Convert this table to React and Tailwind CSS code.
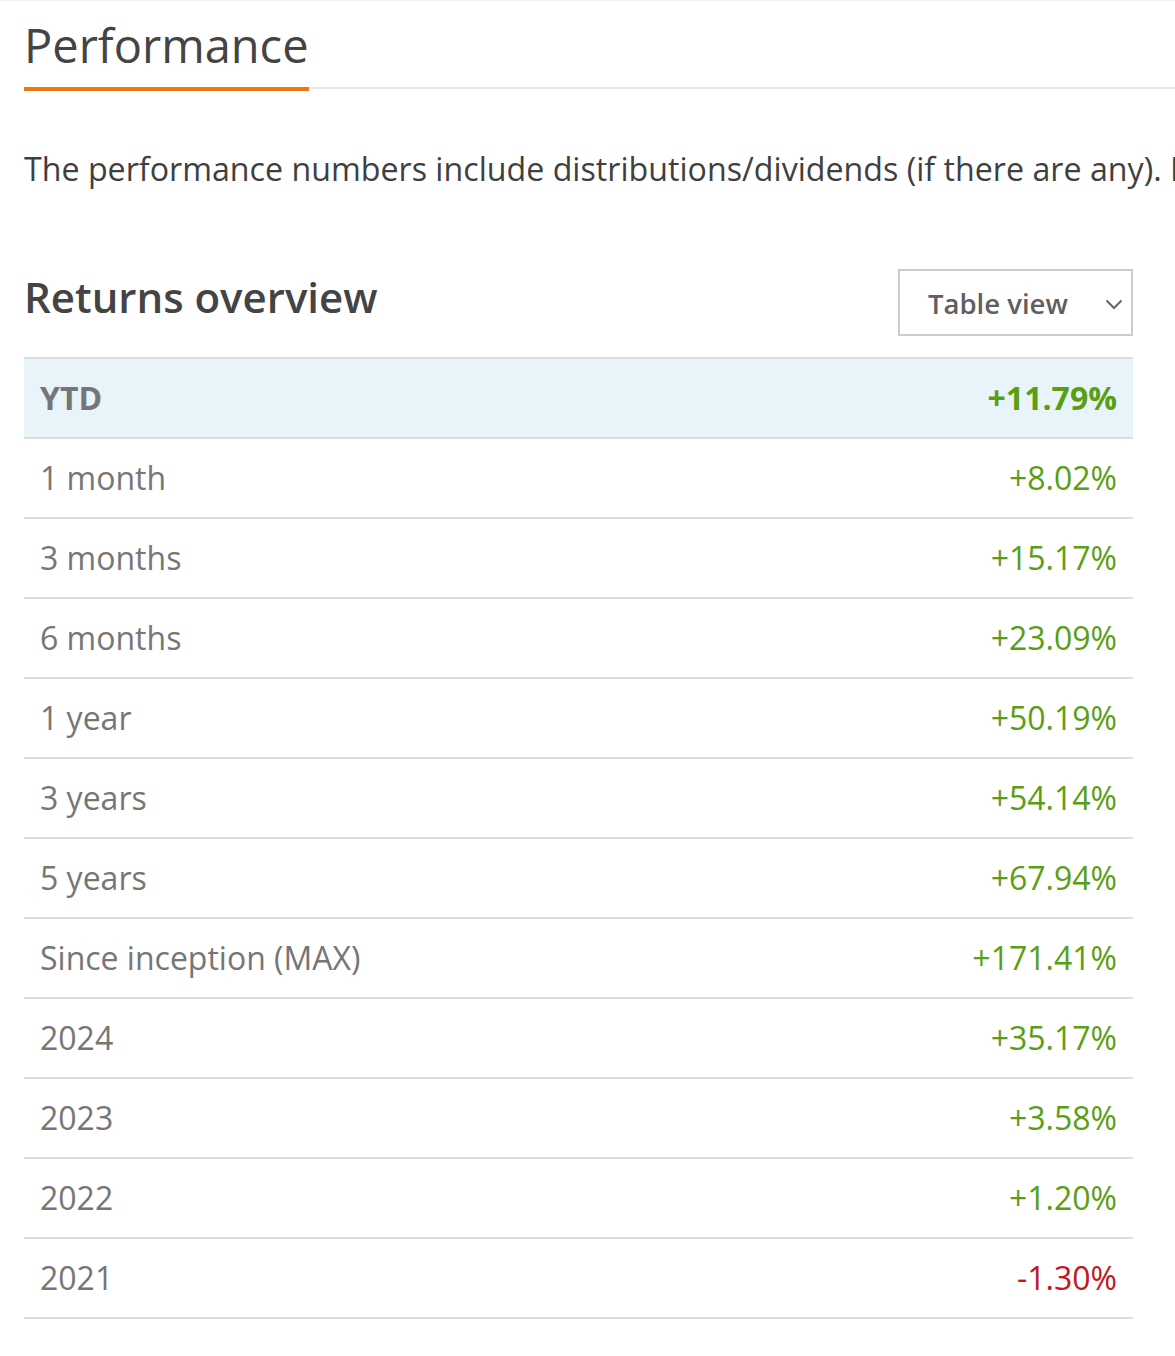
const returns = [
  { label: 'YTD', value: '+11.79%', highlight: true },
  { label: '1 month', value: '+8.02%' },
  { label: '3 months', value: '+15.17%' },
  { label: '6 months', value: '+23.09%' },
  { label: '1 year', value: '+50.19%' },
  { label: '3 years', value: '+54.14%' },
  { label: '5 years', value: '+67.94%' },
  { label: 'Since inception (MAX)', value: '+171.41%' },
  { label: '2024', value: '+35.17%' },
  { label: '2023', value: '+3.58%' },
  { label: '2022', value: '+1.20%' },
  { label: '2021', value: '-1.30%' },
];

function ChevronDown() {
  return (
    <svg width="18" height="11" viewBox="0 0 18 11" fill="none" className="text-[#666]">
      <polyline points="1.5,1.5 9,9 16.5,1.5" stroke="currentColor" strokeWidth="2" />
    </svg>
  );
}

export default function App() {
  return (
    <div
      className="min-h-[1356px] w-[1175px] overflow-hidden bg-white border-t border-[#f2f2f2] pl-6"
      style={{ fontFamily: '"Open Sans", "Noto Sans", sans-serif' }}
    >
      {/* section header */}
      <div className="flex border-b-2 border-[#e6eaee]">
        <h2 className="-mb-[4px] border-b-4 border-[#eb7a0c] pt-[16px] pb-[14px] text-[47px] leading-[56px] text-[#444]">
          Performance
        </h2>
      </div>

      <p className="mt-[56px] whitespace-nowrap text-[32.2px] leading-[48px] text-[#3f3f3f]">
        The performance numbers include distributions/dividends (if there are any). I
      </p>

      <div className="mr-[42px]">
        <div className="mt-[76px] flex items-start justify-between">
          <h3 className="mt-[4px] text-[42px] leading-[48px] font-semibold text-[#444]">Returns overview</h3>
          <button className="flex h-[67px] w-[235px] items-center justify-between border-2 border-[#cccccc] pt-[3px] pl-[28px] pr-[8px] text-[27.5px] font-semibold text-[#5f5f5f]">
            <span>Table view</span>
            <ChevronDown />
          </button>
        </div>

        <div className="mt-[21px] border-t-2 border-[#dddddd]">
          {returns.map((row) => (
            <div
              key={row.label}
              className={`flex h-[80px] items-center justify-between border-b-2 border-[#dddddd] px-4 text-[32px] leading-[44px] ${
                row.highlight ? 'bg-[#e8f3fa] font-bold' : ''
              }`}
            >
              <span className="text-[#767676]">{row.label}</span>
              <span className={row.value.startsWith('-') ? 'text-[#c4161c]' : 'text-[#599e13]'}>{row.value}</span>
            </div>
          ))}
        </div>
      </div>
    </div>
  );
}
